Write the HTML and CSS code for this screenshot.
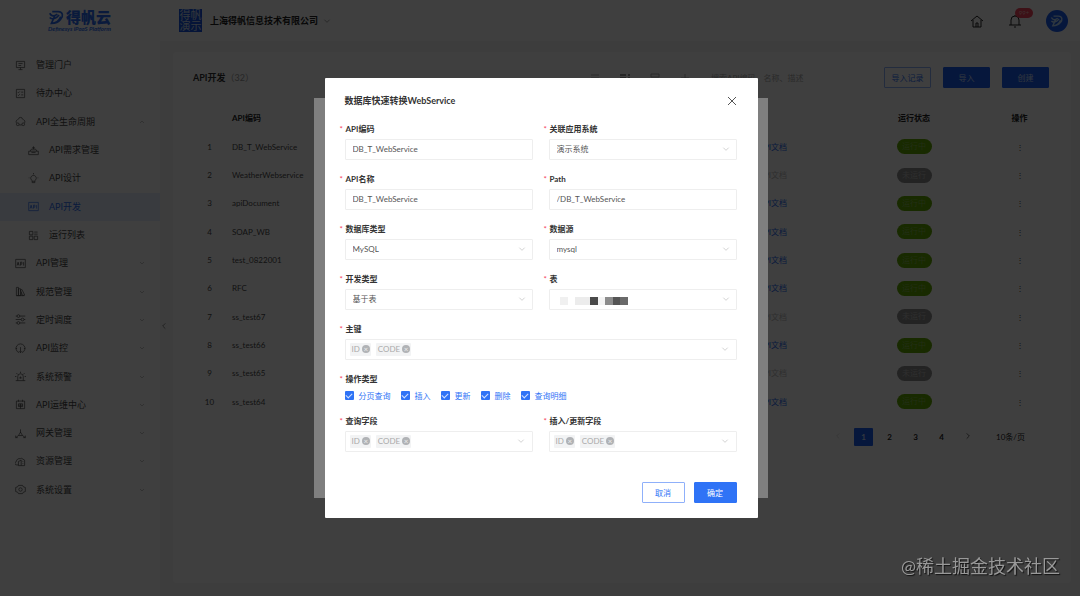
FILE: index.html
```html
<!DOCTYPE html>
<html lang="zh-CN">
<head>
<meta charset="UTF-8">
<title>API开发</title>
<link rel="stylesheet" href="styles.css">
</head>
<body>
<svg class="sprite" aria-hidden="true">
  <symbol id="i-down" viewBox="0 0 12 12"><path d="M2 4l4 4 4-4"/></symbol>
  <symbol id="i-portal" viewBox="0 0 16 16"><path d="M2 2h12v9H2zM5 5h6M5 8h4M8 11v3M5 14h6"/></symbol>
  <symbol id="i-todo" viewBox="0 0 16 16"><path d="M2 2h12v12H2zM4 6l1 1 2-2M9 6h3M4 10l1 1 2-2M9 10h3"/></symbol>
  <symbol id="i-cycle" viewBox="0 0 16 16"><path d="M5 5a3 3 0 1 1 6 0M12 5c2 1 3 3 2 5M2 10C1 8 2 6 4 5M6 13h4"/><circle cx="4" cy="12" r="2"/><circle cx="12" cy="12" r="2"/></symbol>
  <symbol id="i-demand" viewBox="0 0 16 16"><path d="M1 9h14v5H1zM3 9l2-3h6l2 3M8 6V2M6 4h4M5 11h6"/></symbol>
  <symbol id="i-design" viewBox="0 0 16 16"><path d="M8 0v2M1 7h1M14 7h1M6 11a4 4 0 1 1 4 0v3H6zM6 12h4"/></symbol>
  <symbol id="i-api" viewBox="0 0 16 16"><path d="M1 2h14v12H1zM3 11l1.500-5L6 11M3.500 9h2M8 11V6h2v3H8M12.500 6v5"/></symbol>
  <symbol id="i-list" viewBox="0 0 16 16"><path d="M2 2h5v5H2zM2 9h5v5H2zM9 3h5M9 6h5M9 9h5v5H9z"/></symbol>
  <symbol id="i-norm" viewBox="0 0 16 16"><path d="M2 2h3v12H2zM5 4h3v10H5zM8 6l2-1 4 8-3 1zM2 14h12M9 14V9"/></symbol>
  <symbol id="i-timer" viewBox="0 0 16 16"><path d="M1 3h2M7 3h8M1 8h8M13 8h2M1 13h2M7 13h8"/><circle cx="5" cy="3" r="2"/><circle cx="11" cy="8" r="2"/><circle cx="5" cy="13" r="2"/></symbol>
  <symbol id="i-monitor" viewBox="0 0 16 16"><path d="M6 14A6.500 6.500 0 1 1 10 14M8 6v8M6 12l2 2 2-2M1 8h2M13 8h2"/></symbol>
  <symbol id="i-alarm" viewBox="0 0 16 16"><path d="M4 14V8a4 4 0 0 1 8 0v6M1 14h14M8 1v2M2 3l2 2M14 3l-2 2M0 8h2M14 8h2M8 8v3M6 10h4"/></symbol>
  <symbol id="i-ops" viewBox="0 0 16 16"><path d="M2 3h12v11H2zM5 1v3M11 1v3M5 7h6v4H5zM8 7v7M5 9h6"/></symbol>
  <symbol id="i-gateway" viewBox="0 0 16 16"><path d="M8 2v5M5 11L1 14M11 11l4 3M8 6l3 5H5zM1 11v3h3M15 11v3h-3"/></symbol>
  <symbol id="i-resource" viewBox="0 0 16 16"><path d="M5 13H3a2 2 0 0 1-1-5c0-3 3-5 6-4l1-1 5 3v8H5zM5 13V8l4-2v8M11 8h1M11 11h1"/></symbol>
  <symbol id="i-gear" viewBox="0 0 16 16"><path d="M5 2h6l1 2 3 1v6l-3 1-1 2H5l-1-2-3-1V5l3-1z"/><circle cx="8" cy="8" r="2.500"/></symbol>
  <symbol id="i-logo" viewBox="0 0 20 20"><path d="M5 3h7c6 0 6 6 3 9-3 4-7 5-11 5L8 8M2 5c2 4 5 4 9 1M2 10c3 3 8 1 11-3M4 17c5 0 9-3 11-8"/></symbol>
</svg>

<div class="page">
  <header class="topbar">
    <div class="brand">
      <svg class="brand-icon"><use href="#i-logo"/></svg>
      <span class="brand-name">得帆云</span>
      <span class="brand-sub">Definesys iPaaS Platform</span>
    </div>
    <div class="tenant">
      <span class="tenant-logo">得帆演示</span>
      <strong>上海得帆信息技术有限公司</strong>
      <svg class="arrow"><use href="#i-down"/></svg>
    </div>
    <div class="tools">
      <svg class="tool-icon" viewBox="0 0 14 14"><path d="M1 7l6-5 6 5M3 6v7h8V6M6 13V9h2v4"/></svg>
      <span class="bell">
        <svg class="tool-icon" viewBox="0 0 14 14"><path d="M1 11h12M3 11V6a4 4 0 0 1 8 0v5M7 1v1M6 13h2"/></svg>
        <span class="badge">99+</span>
      </span>
      <span class="avatar"><svg><use href="#i-logo"/></svg></span>
    </div>
  </header>

  <div class="body">
    <nav class="sidebar">
      <ul class="menu">
        <li><a href="#"><svg><use href="#i-portal"/></svg>管理门户</a></li>
        <li><a href="#"><svg><use href="#i-todo"/></svg>待办中心</a></li>
        <li class="open"><a href="#"><svg><use href="#i-cycle"/></svg>API全生命周期<svg class="arrow"><use href="#i-down"/></svg></a></li>
        <li class="sub"><a href="#"><svg><use href="#i-demand"/></svg>API需求管理</a></li>
        <li class="sub"><a href="#"><svg><use href="#i-design"/></svg>API设计</a></li>
        <li class="sub active"><a href="#"><svg><use href="#i-api"/></svg>API开发</a></li>
        <li class="sub"><a href="#"><svg><use href="#i-list"/></svg>运行列表</a></li>
        <li><a href="#"><svg><use href="#i-api"/></svg>API管理<svg class="arrow"><use href="#i-down"/></svg></a></li>
        <li><a href="#"><svg><use href="#i-norm"/></svg>规范管理<svg class="arrow"><use href="#i-down"/></svg></a></li>
        <li><a href="#"><svg><use href="#i-timer"/></svg>定时调度<svg class="arrow"><use href="#i-down"/></svg></a></li>
        <li><a href="#"><svg><use href="#i-monitor"/></svg>API监控<svg class="arrow"><use href="#i-down"/></svg></a></li>
        <li><a href="#"><svg><use href="#i-alarm"/></svg>系统预警<svg class="arrow"><use href="#i-down"/></svg></a></li>
        <li><a href="#"><svg><use href="#i-ops"/></svg>API运维中心<svg class="arrow"><use href="#i-down"/></svg></a></li>
        <li><a href="#"><svg><use href="#i-gateway"/></svg>网关管理<svg class="arrow"><use href="#i-down"/></svg></a></li>
        <li><a href="#"><svg><use href="#i-resource"/></svg>资源管理<svg class="arrow"><use href="#i-down"/></svg></a></li>
        <li><a href="#"><svg><use href="#i-gear"/></svg>系统设置<svg class="arrow"><use href="#i-down"/></svg></a></li>
      </ul>
      <button class="collapse" type="button" aria-label="收起"><svg class="arrow"><use href="#i-down"/></svg></button>
    </nav>

    <main class="card">
      <div class="toolbar">
        <h1>API开发</h1><span class="count">（32）</span>
        <div class="views">
          <svg viewBox="0 0 10 10"><path d="M1 2h8M1 5h8M1 8h8"/></svg>
          <svg class="picked" viewBox="0 0 10 10"><path d="M0 2h6M0 5h6M0 8h6M8 2h2M8 5h2M8 8h2"/></svg>
          <svg viewBox="0 0 10 10"><path d="M1 1h8v3H1zM1 6h8v3H1z"/></svg>
          <svg viewBox="0 0 10 10"><path d="M5 1v8M1 5h8"/></svg>
        </div>
        <input class="search" type="text" aria-label="搜索" placeholder="搜索API编码、名称、描述">
        <button class="btn" type="button">导入记录</button>
        <button class="btn primary" type="button">导入</button>
        <button class="btn primary" type="button">创建</button>
      </div>

      <table class="list">
        <thead>
          <tr><th class="num"></th><th>API编码</th><th class="doc"></th><th class="state">运行状态</th><th class="op">操作</th></tr>
        </thead>
        <tbody>
          <tr><td class="num">1</td><td>DB_T_WebService</td><td class="doc"><a href="#">API文档</a></td><td class="state"><span class="pill on">运行中</span></td><td class="op">⋮</td></tr>
          <tr><td class="num">2</td><td>WeatherWebservice</td><td class="doc off">API文档</td><td class="state"><span class="pill">未运行</span></td><td class="op">⋮</td></tr>
          <tr><td class="num">3</td><td>apiDocument</td><td class="doc"><a href="#">API文档</a></td><td class="state"><span class="pill on">运行中</span></td><td class="op">⋮</td></tr>
          <tr><td class="num">4</td><td>SOAP_WB</td><td class="doc"><a href="#">API文档</a></td><td class="state"><span class="pill on">运行中</span></td><td class="op">⋮</td></tr>
          <tr><td class="num">5</td><td>test_0822001</td><td class="doc"><a href="#">API文档</a></td><td class="state"><span class="pill on">运行中</span></td><td class="op">⋮</td></tr>
          <tr><td class="num">6</td><td>RFC</td><td class="doc"><a href="#">API文档</a></td><td class="state"><span class="pill on">运行中</span></td><td class="op">⋮</td></tr>
          <tr><td class="num">7</td><td>ss_test67</td><td class="doc off">API文档</td><td class="state"><span class="pill">未运行</span></td><td class="op">⋮</td></tr>
          <tr><td class="num">8</td><td>ss_test66</td><td class="doc"><a href="#">API文档</a></td><td class="state"><span class="pill on">运行中</span></td><td class="op">⋮</td></tr>
          <tr><td class="num">9</td><td>ss_test65</td><td class="doc off">API文档</td><td class="state"><span class="pill">未运行</span></td><td class="op">⋮</td></tr>
          <tr><td class="num">10</td><td>ss_test64</td><td class="doc"><a href="#">API文档</a></td><td class="state"><span class="pill on">运行中</span></td><td class="op">⋮</td></tr>
        </tbody>
      </table>

      <div class="pager">
        <button class="prev" type="button" aria-label="上一页" disabled><svg class="arrow"><use href="#i-down"/></svg></button>
        <button class="current" type="button">1</button>
        <button type="button">2</button>
        <button type="button">3</button>
        <button type="button">4</button>
        <button class="next" type="button" aria-label="下一页"><svg class="arrow"><use href="#i-down"/></svg></button>
        <span class="size">10条/页</span>
      </div>
    </main>
  </div>
</div>

<div class="mask"><div class="dialog-back"></div></div>

<div class="mask">
  <form class="dialog">
    <div class="dialog-head">
      <h2>数据库快速转换WebService</h2>
      <button class="close" type="button" aria-label="关闭"><svg viewBox="0 0 10 10"><path d="M1 1l8 8M9 1L1 9"/></svg></button>
    </div>

    <div class="fields">
      <div class="field">
        <label for="code">API编码</label>
        <input class="box" id="code" type="text" value="DB_T_WebService">
      </div>
      <div class="field">
        <label for="system">关联应用系统</label>
        <div class="picker">
          <select class="box" id="system"><option>演示系统</option></select>
          <svg class="arrow"><use href="#i-down"/></svg>
        </div>
      </div>
      <div class="field">
        <label for="name">API名称</label>
        <input class="box" id="name" type="text" value="DB_T_WebService">
      </div>
      <div class="field">
        <label for="path">Path</label>
        <input class="box" id="path" type="text" value="/DB_T_WebService">
      </div>
      <div class="field">
        <label for="dbtype">数据库类型</label>
        <div class="picker">
          <select class="box" id="dbtype"><option>MySQL</option></select>
          <svg class="arrow"><use href="#i-down"/></svg>
        </div>
      </div>
      <div class="field">
        <label for="source">数据源</label>
        <div class="picker">
          <select class="box" id="source"><option>mysql</option></select>
          <svg class="arrow"><use href="#i-down"/></svg>
        </div>
      </div>
      <div class="field">
        <label for="devtype">开发类型</label>
        <div class="picker">
          <select class="box" id="devtype"><option>基于表</option></select>
          <svg class="arrow"><use href="#i-down"/></svg>
        </div>
      </div>
      <div class="field">
        <label for="table">表</label>
        <div class="picker">
          <select class="box" id="table"><option value=""></option></select>
          <!-- 表名打码 -->
          <svg class="mosaic" viewBox="0 0 68 8">
            <rect x="0" width="8" height="8" fill="#f0f0f0"/>
            <rect x="15" width="15" height="8" fill="#ececec"/>
            <rect x="30" width="8" height="8" fill="#4a4a4a"/>
            <rect x="38" width="7" height="8" fill="#f4f4f4"/>
            <rect x="45" width="8" height="8" fill="#8c8c8c"/>
            <rect x="53" width="7" height="8" fill="#555"/>
            <rect x="60" width="8" height="8" fill="#6a6a6a"/>
          </svg>
          <svg class="arrow"><use href="#i-down"/></svg>
        </div>
      </div>
      <div class="field wide">
        <span class="label" id="l-pk">主键</span>
        <div class="box tags" role="group" aria-labelledby="l-pk">
          <span class="tag">ID<button type="button" aria-label="移除 ID"></button></span>
          <span class="tag">CODE<button type="button" aria-label="移除 CODE"></button></span>
          <svg class="arrow"><use href="#i-down"/></svg>
        </div>
      </div>
      <div class="field wide">
        <span class="label" id="l-ops">操作类型</span>
        <div class="checks" role="group" aria-labelledby="l-ops">
          <label><input type="checkbox" checked>分页查询</label>
          <label><input type="checkbox" checked>插入</label>
          <label><input type="checkbox" checked>更新</label>
          <label><input type="checkbox" checked>删除</label>
          <label><input type="checkbox" checked>查询明细</label>
        </div>
      </div>
      <div class="field">
        <span class="label" id="l-query">查询字段</span>
        <div class="box tags" role="group" aria-labelledby="l-query">
          <span class="tag">ID<button type="button" aria-label="移除 ID"></button></span>
          <span class="tag">CODE<button type="button" aria-label="移除 CODE"></button></span>
          <svg class="arrow"><use href="#i-down"/></svg>
        </div>
      </div>
      <div class="field">
        <span class="label" id="l-update">插入/更新字段</span>
        <div class="box tags" role="group" aria-labelledby="l-update">
          <span class="tag">ID<button type="button" aria-label="移除 ID"></button></span>
          <span class="tag">CODE<button type="button" aria-label="移除 CODE"></button></span>
          <svg class="arrow"><use href="#i-down"/></svg>
        </div>
      </div>
    </div>

    <div class="dialog-foot">
      <button class="btn" type="button">取消</button>
      <button class="btn primary" type="submit">确定</button>
    </div>
  </form>
</div>

<div class="watermark">@稀土掘金技术社区</div>
</body>
</html>
```

FILE: styles.css
```css
* {
  box-sizing: border-box;
}

body {
  margin: 0;
  font-family: Lato, "Noto Sans CJK SC", sans-serif;
  font-size: 8px;
  line-height: 16px;
  color: #555;
  background-color: #f6f6f6;
}

button, input, select {
  font: inherit;
  color: inherit;
  margin: 0;
}

button {
  padding: 0;
  border: none;
  background: none;
  cursor: pointer;
}

a {
  color: inherit;
  text-decoration: none;
}

h1, h2 {
  margin: 0;
  font-size: 9px;
  color: #333;
}

svg {
  fill: none;
  stroke: currentColor;
}

.sprite {
  display: none;
}

.arrow {
  width: 8px;
  height: 8px;
  flex: none;
}

.page {
  min-height: 100vh;
  display: flex;
  flex-direction: column;
}

/* 顶栏 */
.topbar {
  height: 41px;
  padding: 0 12px 0 48px;
  display: flex;
  align-items: center;
  background-color: #fff;
}

.brand {
  width: 131px;
  display: grid;
  grid-template-columns: 18px 1fr;
  color: #2a6bf0;
}

.brand-icon {
  width: 17px;
  height: 17px;
  stroke-width: 2;
}

.brand-name {
  font-size: 15px;
  font-weight: 900;
  line-height: 17px;
}

.brand-sub {
  grid-column: 1 / 3;
  font-size: 6px;
  font-weight: bold;
  font-style: italic;
  line-height: 6px;
}

.tenant {
  flex: 1;
  display: flex;
  align-items: center;
  gap: 8px;
  font-size: 9px;
  color: #222;
}

.tenant-logo {
  width: 23px;
  height: 23px;
  font-size: 11px;
  line-height: 11px;
  text-align: center;
  color: #cde;
  background-color: #1552e0;
}

.tenant .arrow {
  margin-left: -3px;
  color: #777;
}

.tools {
  display: flex;
  align-items: center;
  gap: 24px;
  color: #222;
}

.tool-icon {
  display: block;
  width: 14px;
  height: 14px;
}

.bell {
  position: relative;
}

.badge {
  position: absolute;
  left: 7px;
  top: -6px;
  width: 18px;
  height: 10px;
  border-radius: 5px;
  font-size: 6px;
  line-height: 10px;
  text-align: center;
  color: #fbb;
  background-color: #f5455c;
}

.avatar {
  width: 22px;
  height: 22px;
  border-radius: 50%;
  display: grid;
  place-items: center;
  color: #bdf;
  background-color: #1a5cf0;
}

.avatar svg {
  width: 14px;
  height: 14px;
  stroke-width: 2;
}

/* 侧边菜单 */
.body {
  flex: 1;
  display: flex;
}

.sidebar {
  position: relative;
  width: 160px;
  padding-top: 10px;
  background-color: #fff;
}

.menu {
  height: 76vh;
  margin: 0;
  padding: 0;
  display: grid;
  grid-auto-rows: 1fr;
  list-style: none;
  font-size: 9px;
}

.menu a {
  height: 100%;
  padding: 0 15px;
  display: flex;
  align-items: center;
  color: #444;
}

.menu svg {
  width: 11px;
  height: 11px;
  margin-right: 10px;
}

.menu .arrow {
  width: 6px;
  height: 6px;
  margin: 0 0 0 auto;
  color: #888;
}

.menu .open .arrow {
  transform: rotate(180deg);
}

.menu .sub a {
  padding-left: 28px;
}

.menu .active a {
  color: #2a6bf0;
  background-color: #e4efff;
}

.collapse {
  position: absolute;
  right: -8px;
  top: 50%;
  width: 8px;
  height: 10px;
}

.collapse .arrow {
  transform: rotate(90deg);
}

/* 列表 */
.card {
  flex: 1;
  margin: 11px 9px 13px 13px;
  padding: 15px 18px 0 20px;
  border-radius: 4px;
  background-color: #fff;
}

.toolbar {
  padding-right: 4px;
  display: flex;
  align-items: center;
}

.count {
  flex: 1;
  font-size: 9px;
  color: #999;
}

.views {
  margin-right: 21px;
  display: flex;
  gap: 20px;
  color: #aaa;
}

.views svg {
  width: 10px;
  height: 10px;
}

.views .picked {
  color: #333;
}

.search {
  width: 173px;
  border: none;
  padding: 0;
  background: none;
}

.search::placeholder {
  color: #aaa;
}

.btn {
  height: 21px;
  min-width: 43px;
  padding: 0 6px;
  border: 1px solid #8fb0fa;
  border-radius: 1px;
  color: #2f73f6;
  background-color: #fff;
}

.btn.primary {
  border-color: #2f73f6;
  color: #fff;
  background-color: #2f73f6;
}

.toolbar .btn {
  min-width: 47px;
  margin-left: 12px;
}

.toolbar .btn:first-of-type {
  margin-left: 0;
}

.toolbar .primary {
  border-color: #1a5cf0;
  color: #cdf;
  background-color: #1a5cf0;
}

.list {
  width: 100%;
  margin-top: 15px;
  border-collapse: collapse;
  table-layout: fixed;
  color: #4a4a4a;
}

.list th, .list td {
  height: 28px;
  padding: 0 0 0 6px;
  text-align: left;
}

/* 每三行补一像素 */
.list tr:nth-child(3n + 1) > * {
  height: 29px;
}

.list th {
  color: #222;
}

.list .num {
  width: 33px;
  padding: 0;
  text-align: center;
}

.list .doc {
  padding-right: 55px;
  text-align: right;
  color: #2a6bf0;
}

.list .off {
  color: #bbb;
}

.list .state {
  width: 144px;
  padding: 0;
  text-align: center;
}

.list .op {
  width: 67px;
  padding: 0;
  text-align: center;
}

.pill {
  display: block;
  width: 35px;
  height: 15px;
  margin: 0 auto;
  border-radius: 8px;
  line-height: 15px;
  color: #bbb;
  background-color: #8e8e8e;
}

.pill.on {
  color: #8b5;
  background-color: #62a800;
}

.pager {
  margin-top: 12px;
  padding-right: 28px;
  display: flex;
  justify-content: flex-end;
  align-items: center;
  gap: 7px;
  color: #222;
}

.pager button {
  width: 19px;
  height: 18px;
  border-radius: 1px;
  font-weight: bold;
}

.pager .current {
  color: #cdf;
  background-color: #1a5cf0;
}

.pager .prev {
  color: #ccc;
}

.pager .prev .arrow {
  transform: rotate(90deg);
}

.pager .next .arrow {
  transform: rotate(-90deg);
}

.size {
  margin-left: 12px;
}

/* 弹窗 */
.mask {
  position: fixed;
  inset: 0;
  padding-left: 2px;
  display: flex;
  align-items: center;
  justify-content: center;
  background-color: rgba(0, 0, 0, 0.5);
}

.dialog-back {
  width: 454px;
  height: 400px;
  background-color: #fff;
}

.dialog {
  width: 433px;
  padding: 15px 21px 15px 20px;
  border-radius: 1px;
  background-color: #fff;
}

.dialog-head {
  margin-bottom: 12px;
  display: flex;
  align-items: center;
  justify-content: space-between;
}

.close {
  height: 16px;
}

.close svg {
  display: block;
  width: 10px;
  height: 10px;
}

.fields {
  display: grid;
  grid-template-columns: 1fr 1fr;
  gap: 11px 16px;
}

.wide {
  grid-column: 1 / 3;
}

.field > label, .label {
  display: block;
  margin: 0 0 2px -5px;
  font-weight: bold;
  color: #333;
}

.field > label::before, .label::before {
  content: "*";
  display: inline-block;
  width: 6px;
  font-weight: normal;
  color: #f5455c;
}

.box {
  display: block;
  width: 100%;
  height: 21px;
  padding: 0 7px 1px;
  border: 1px solid #eee;
  border-radius: 1px;
  background-color: #fff;
  appearance: none;
}

.picker {
  position: relative;
}

.picker .arrow {
  position: absolute;
  right: 7px;
  top: 6px;
  color: #bbb;
}

.mosaic {
  position: absolute;
  left: 11px;
  top: 8px;
  width: 68px;
  height: 8px;
  stroke: none;
}

.tags {
  display: flex;
  align-items: center;
  gap: 5px;
  padding-left: 4px;
}

.tags .arrow {
  margin-left: auto;
  color: #bbb;
}

.tag {
  height: 13px;
  padding: 0 1px 0 2px;
  border-radius: 1px;
  display: flex;
  align-items: center;
  gap: 2px;
  color: #aaa;
  background-color: #f2f3f4;
}

.tag button {
  width: 8px;
  height: 8px;
  border-radius: 50%;
  line-height: 7px;
  color: #eee;
  background-color: #b0b2b5;
}

.tag button::before {
  content: "×";
}

.checks {
  height: 13px;
  display: flex;
  align-items: center;
  gap: 10px;
  color: #2f73f6;
}

.checks label {
  display: flex;
  align-items: center;
  gap: 5px;
}

.checks input {
  width: 9px;
  height: 9px;
  border-radius: 1px;
  display: grid;
  place-items: center;
  background-color: #2f73f6;
  appearance: none;
}

.checks input:checked::before {
  content: "";
  width: 5px;
  height: 3px;
  margin-bottom: 1px;
  border: solid #cfe0ff;
  border-width: 0 0 1px 1px;
  transform: rotate(-45deg);
}

.dialog-foot {
  margin-top: 30px;
  display: flex;
  justify-content: flex-end;
  gap: 9px;
}

.watermark {
  position: fixed;
  right: 20px;
  bottom: 17px;
  font-size: 18px;
  line-height: 26px;
  color: #999;
  text-shadow: 1px 1px 1px #111;
}
```
